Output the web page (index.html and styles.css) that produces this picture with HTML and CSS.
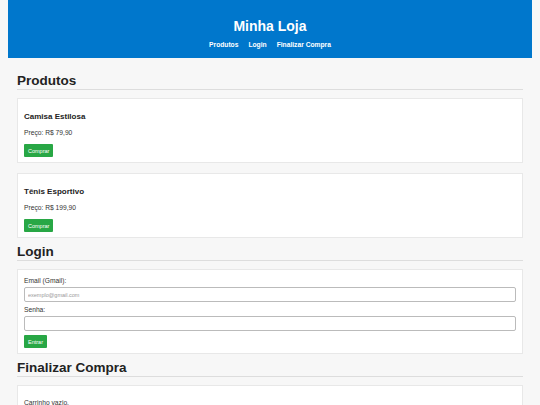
FILE: index.html
```html
<!DOCTYPE html>
<html lang="pt-BR">
<head>
  <meta charset="UTF-8">
  <meta name="viewport" content="width=device-width, initial-scale=1.0">
  <title>Minha Loja</title>
  <link rel="stylesheet" href="styles.css">
</head>
<body>

  <header>
    <h1>Minha Loja</h1>
    <nav>
      <a href="#produtos">Produtos</a>
      <a href="#login">Login</a>
      <a href="#checkout">Finalizar Compra</a>
    </nav>
  </header>

  <main>
    <section id="produtos">
      <h2>Produtos</h2>
      <div class="produto">
        <h3>Camisa Estilosa</h3>
        <p>Preço: R$ 79,90</p>
        <button>Comprar</button>
      </div>
      <div class="produto">
        <h3>Tênis Esportivo</h3>
        <p>Preço: R$ 199,90</p>
        <button>Comprar</button>
      </div>
    </section>

    <section id="login">
      <h2>Login</h2>
      <form class="caixa">
        <label for="email">Email (Gmail):</label>
        <input type="email" id="email" placeholder="exemplo@gmail.com">
        <label for="senha">Senha:</label>
        <input type="password" id="senha">
        <button type="submit">Entrar</button>
      </form>
    </section>

    <section id="checkout">
      <h2>Finalizar Compra</h2>
      <div class="caixa carrinho">
        <p>Carrinho vazio.</p>
      </div>
    </section>
  </main>

</body>
</html>
```

FILE: styles.css
```css
body {
  font-family: "Liberation Sans", Arial, sans-serif;
  background: #f7f7f7;
  color: #333;
  margin: 0 8px 8px;
  font-size: 6.7px;
}
header {
  background: #0077cc;
  color: #fff;
  text-align: center;
  padding: 17px 0 7px;
}
header h1 {
  margin: 0 0 4px;
  font-size: 14px;
  line-height: 18px;
}
nav {
  display: flex;
  justify-content: center;
  gap: 10px;
  line-height: 12px;
}
nav a {
  color: #fff;
  text-decoration: none;
  font-weight: bold;
  font-size: 6.7px;
}
main {
  padding: 9px 9px;
}
h2 {
  font-size: 13.5px;
  line-height: 12px;
  color: #222;
  margin: 8px 0 8px;
  padding-bottom: 2px;
  border-bottom: 1px solid #ddd;
}
.produto, .caixa {
  background: #fff;
  border: 1px solid #e8e8e8;
  padding: 6px 6px 5px;
}
.produto + .produto {
  margin-top: 10px;
}
.produto h3 {
  font-size: 8px;
  line-height: 10px;
  color: #222;
  margin: 7px 0 6px;
}
.produto p {
  margin: 6px 0;
  line-height: 10px;
}
button {
  display: block;
  background: #28a745;
  color: #fff;
  border: none;
  border-radius: 1px;
  font-family: inherit;
  font-size: 5.5px;
  height: 13px;
  padding: 0 4px;
}
.caixa {
  display: flex;
  flex-direction: column;
  align-items: flex-start;
  padding-top: 6px;
}
.caixa label {
  line-height: 10px;
}
.caixa input {
  align-self: stretch;
  box-sizing: border-box;
  height: 15px;
  margin: 1px 0 3px;
  border: 1px solid #bbb;
  border-radius: 2px;
  padding: 0 3px;
  font-family: inherit;
  font-size: 5.5px;
}
.caixa input::placeholder {
  color: #999;
}
.caixa button {
  margin-top: 1px;
}
.carrinho p {
  margin: 6px 0;
  line-height: 10px;
}
```
